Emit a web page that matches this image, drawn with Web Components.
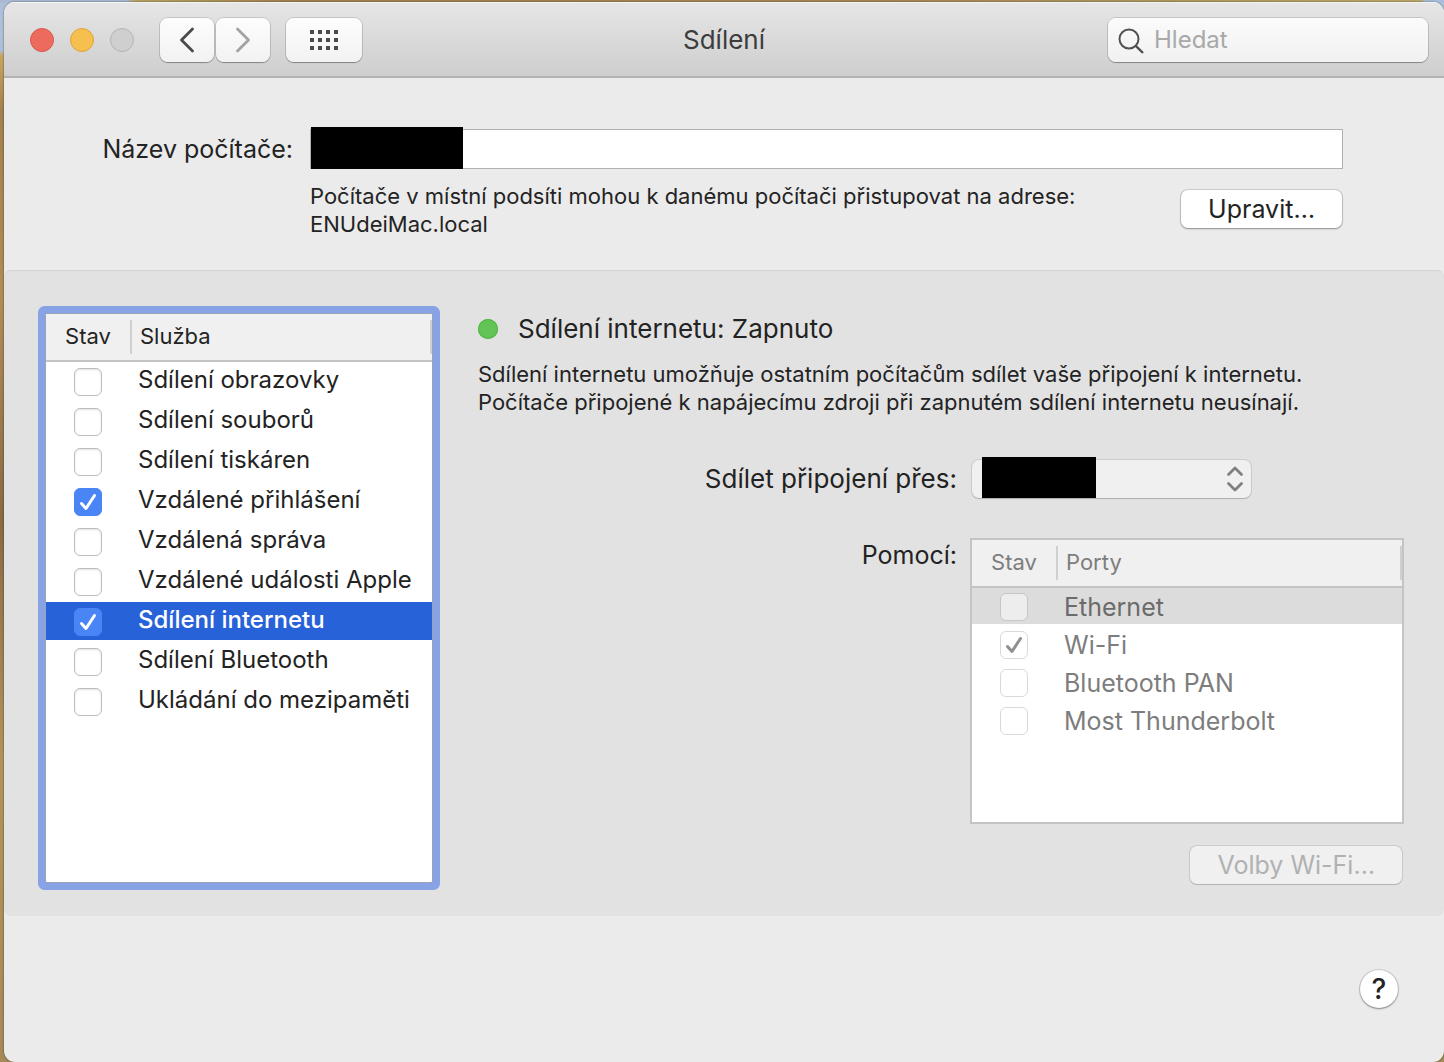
<!DOCTYPE html>
<html lang="cs">
<head>
<meta charset="utf-8">
<meta name="viewport" content="width=device-width, initial-scale=1">
<title>Sdílení</title>
<style>
  body {
    margin: 0;
    min-height: 100vh;
    box-sizing: border-box;
    padding: 2px 0 0 4px;
    display: flex;
    font-family: Inter, "Liberation Sans", sans-serif;
    font-size: 25px;
    line-height: 34px;
    color: #232323;
    background:
      linear-gradient(90deg, #a9b9d2 0 126px, #b9a364 136px, #a08350 300px, #a68a58 900px, #bda968 1420px, #a9bedd 1426px) 0 0 / 100% 3px no-repeat,
      linear-gradient(#aebfda 0, #aebfda 50px, #c9a562 56px, #a38150 110px, #b08c58 300px, #8a6a45 520px, #b3935c 760px, #a58a58 100%);
  }
</style>
</head>
<body>
<prefs-window>
  <title-bar slot="title">Sdílení</title-bar>
  <computer-name host="ENUdeiMac.local"></computer-name>
  <sharing-panel></sharing-panel>
  <help-bar slot="footer"></help-bar>
</prefs-window>

<script>
const define = (name, html, setup) => {
  const template = document.createElement('template');
  template.innerHTML = html;
  customElements.define(name, class extends HTMLElement {
    connectedCallback() {
      if (this.shadowRoot) return;
      this.attachShadow({ mode: 'open' }).append(template.content.cloneNode(true));
      if (setup) setup(this, this.shadowRoot);
    }
  });
};

define('prefs-window', `
  <style>
    :host { flex: 1; display: flex; flex-direction: column; min-width: 0; overflow: hidden;
      background: #ebebeb; border-radius: 11px; box-shadow: 0 0 2px rgba(0,0,0,.6); }
    main { display: flex; flex-direction: column; }
  </style>
  <slot name="title"></slot>
  <main><slot></slot></main>
  <slot name="footer"></slot>
`);

define('tool-button', `
  <style>
    :host { display: block; }
    button { display: flex; align-items: center; justify-content: center; width: var(--tool-width, 54px); height: 44px;
      padding: 0; border: 0; border-radius: 8px; color: #4a4a4a;
      background: linear-gradient(#fdfdfd, #f2f2f2);
      box-shadow: 0 0 0 1px rgba(0,0,0,.12), 0 1px 1px rgba(0,0,0,.28); }
    button:disabled { color: #a3a3a3; }
  </style>
  <button type="button"><slot></slot></button>
`, (host, root) => {
  const button = root.querySelector('button');
  button.disabled = host.hasAttribute('disabled');
  button.setAttribute('aria-label', host.getAttribute('label'));
});

define('search-field', `
  <style>
    :host { display: block; width: 320px; }
    label { display: flex; align-items: center; gap: 10px; height: 44px; padding: 0 10px; box-sizing: border-box;
      border-radius: 8px; background: linear-gradient(#fbfbfb, #f1f1f1);
      box-shadow: 0 0 0 1px rgba(0,0,0,.12), 0 1px 1px rgba(0,0,0,.28); }
    svg { flex: none; margin-top: 2px; }
    input { flex: 1; min-width: 0; padding: 0; border: 0; outline: 0; background: none; font: inherit; font-size: 24px; color: #232323; }
    input::placeholder { color: #a8a8a8; opacity: 1; }
    input::-webkit-search-cancel-button { display: none; }
  </style>
  <label>
    <svg width="26" height="26" viewBox="0 0 26 26" fill="none" stroke="#505050" stroke-width="2" aria-hidden="true">
      <circle cx="11" cy="11" r="9.5"/><path d="M17.8 17.8 25 25" stroke-width="2.4"/>
    </svg>
    <input type="search" placeholder="Hledat" aria-label="Hledat">
  </label>
`);

define('title-bar', `
  <style>
    :host { display: grid; grid-template-columns: 1fr auto 1fr; align-items: center; height: 76px; box-sizing: border-box;
      padding: 2px 16px 0; border-bottom: 2px solid #b2b2b2;
      background: linear-gradient(#e6e6e6, #cecece); box-shadow: inset 0 1px #f4f4f4; }
    .left, .lights, .nav { display: flex; align-items: center; }
    .left { padding-left: 10px; }
    .lights { gap: 16px; margin-right: 26px; }
    .lights button { width: 24px; height: 24px; padding: 0; box-sizing: border-box; border-radius: 50%;
      border: 1px solid var(--edge); background: var(--fill); }
    .close { --fill: #ed6a5f; --edge: #d8574e; }
    .min { --fill: #f6bf4e; --edge: #dca53b; }
    .zoom { --fill: #cfcfcf; --edge: #b3b3b3; }
    .nav { gap: 2px; margin-right: 16px; }
    .grid { --tool-width: 76px; }
    h1 { margin: 0; font: inherit; font-size: 26px; color: #3c3c3c; }
    search-field { justify-self: end; }
  </style>
  <div class="left">
    <div class="lights">
      <button type="button" class="close" aria-label="Zavřít"></button>
      <button type="button" class="min" aria-label="Minimalizovat"></button>
      <button type="button" class="zoom" aria-label="Zvětšit" disabled></button>
    </div>
    <div class="nav">
      <tool-button label="Zpět">
        <svg width="16" height="26" viewBox="0 0 16 26" fill="none" stroke="currentColor" stroke-width="2.8" stroke-linecap="round" stroke-linejoin="round"><path d="M13.5 2 2.5 13l11 11"/></svg>
      </tool-button>
      <tool-button label="Vpřed" disabled>
        <svg width="16" height="26" viewBox="0 0 16 26" fill="none" stroke="currentColor" stroke-width="2.8" stroke-linecap="round" stroke-linejoin="round"><path d="m2.5 2 11 11-11 11"/></svg>
      </tool-button>
    </div>
    <tool-button class="grid" label="Zobrazit vše">
      <svg width="28" height="20" viewBox="0 0 28 20" fill="none" stroke="currentColor" stroke-width="4" stroke-dasharray="4 4"><path d="M0 2h28M0 10h28M0 18h28"/></svg>
    </tool-button>
  </div>
  <h1><slot></slot></h1>
  <search-field></search-field>
`);

define('push-button', `
  <style>
    :host { display: block; }
    button { height: 38px; padding: 0 27px; border: 0; border-radius: 7px; font: inherit; line-height: 38px;
      color: #232323; background: #fff; box-shadow: 0 0 0 1px rgba(0,0,0,.13), 0 1px 2px rgba(0,0,0,.3); }
    button:disabled { color: #b1b1b1; background: #f0f0f0; box-shadow: 0 0 0 1px rgba(0,0,0,.1), 0 1px 1px rgba(0,0,0,.12); }
  </style>
  <button type="button"><slot></slot></button>
`, (host, root) => {
  root.querySelector('button').disabled = host.hasAttribute('disabled');
});

define('computer-name', `
  <style>
    :host { display: grid; grid-template-columns: 289px 1fr; column-gap: 17px; row-gap: 13px;
      padding: 51px 101px 32px 0; }
    label { justify-self: end; align-self: center; }
    .field { position: relative; }
    input { display: block; width: 100%; height: 40px; box-sizing: border-box; padding: 0 8px; border: 1px solid #b1b1b1;
      border-radius: 0; background: #fff; font: inherit; outline: 0; }
    .mask { position: absolute; left: 1px; top: -2px; width: 152px; height: 42px; background: #000; }
    .info { grid-column: 2; display: flex; justify-content: space-between; gap: 24px; }
    p { margin: 0; font-size: 22px; line-height: 28px; }
    push-button { padding: 8px 1px 0 0; }
  </style>
  <label for="name">Název počítače:</label>
  <div class="field"><input id="name" type="text"><span class="mask"></span></div>
  <div class="info">
    <p>Počítače v místní podsíti mohou k danému počítači přistupovat na adrese:<br><span id="host"></span></p>
    <push-button>Upravit…</push-button>
  </div>
`, (host, root) => {
  root.getElementById('host').textContent = host.getAttribute('host');
});

define('check-table', `
  <style>
    :host { display: block; box-sizing: border-box; background: #fff; border: 2px solid #c4c4c4; color: #7d7d7d; --line: #c4c4c4; }
    :host([focused]) { color: #232323; border: 1px solid #9aa3b8; box-shadow: 0 0 0 7px #87a3e5; border-radius: 2px; font-size: 24px; }
    table { width: 100%; border-collapse: separate; border-spacing: 0; table-layout: fixed; }
    th { height: 46px; padding: 0 0 2px 8px; box-sizing: border-box; text-align: left; font-weight: 400; font-size: 22px; line-height: 28px;
      box-shadow: 0 2px var(--line);
      background: linear-gradient(#d0d0d0, #d0d0d0) right 0 top 6px / 2px 34px no-repeat, #f0f0f0; }
    thead { position: relative; z-index: 1; }
    th:first-child { width: 86px; padding: 0 2px 2px 0; text-align: center; }
    td { height: 38px; box-sizing: border-box; padding: 4px 0 0; line-height: 34px; background-clip: border-box; }
    td:first-child { padding-right: 2px; text-align: center; }
    td:last-child { padding-left: 6px; }
    :host([focused]) td { height: 40px; padding-top: 0; border-bottom: 2px solid transparent; background-clip: padding-box; }
    :host([focused]) th { height: 48px; border-bottom: 2px solid var(--line); box-shadow: none; }
    td label { display: block; }
    :host([focused]) td label { margin-bottom: 2px; }
    input { appearance: none; display: block; width: 28px; height: 28px; margin: 0; box-sizing: border-box;
      border: 1px solid #bdbdbd; border-radius: 6px; background: #fff; box-shadow: inset 0 1px 2px rgba(0,0,0,.12); }
    .box { display: grid; width: 28px; margin: 0 auto; }
    :host([focused]) .box { padding-top: 2px; }
    .box > * { grid-area: 1 / 1; }
    .box svg { display: none; z-index: 1; pointer-events: none; color: #8f8f8f; }
    input:checked + svg { display: block; }
    input:disabled { border-color: #d9d9d9; box-shadow: none; }
    :host([focused]) .box svg { color: #fff; }
    :host([focused]) input:checked { background-color: #4a85f6; border-color: #4a85f6; box-shadow: none; }
    tr.selected td { background-color: #dcdcdc; }
    tr.selected { color: #6b6b6b; }
    tr.selected input { background-color: #ededed; border-color: #c6c6c6; }
    :host([focused]) tr.selected { color: #fff; font-weight: 500; }
    :host([focused]) tr.selected td { background-color: #2862d9; }
  </style>
  <table>
    <thead><tr><th scope="col">Stav</th><th scope="col"></th></tr></thead>
    <tbody></tbody>
  </table>
`, (host, root) => {
  root.querySelectorAll('th')[1].textContent = host.getAttribute('heading');
  const body = root.querySelector('tbody');
  [...host.querySelectorAll('data')].forEach((item, i) => {
    const row = body.insertRow();
    row.className = item.hasAttribute('selected') ? 'selected' : '';
    row.innerHTML = `<td><div class="box"><input type="checkbox" id="c${i}">
      <svg width="28" height="28" viewBox="0 0 28 28" fill="none" stroke="currentColor" stroke-width="3" stroke-linecap="round" stroke-linejoin="round"><path d="m7.500 15.500 4.500 5 8.500-13"/></svg></div></td>
      <td><label for="c${i}"></label></td>`;
    const input = row.querySelector('input');
    input.checked = item.hasAttribute('checked');
    input.disabled = host.hasAttribute('disabled');
    row.querySelector('label').textContent = item.textContent;
  });
});

define('sharing-panel', `
  <style>
    :host { display: flex; align-items: flex-start; gap: 38px; padding: 35px 40px 26px 34px; border: solid #d3d3d3; border-width: 1px 0 0;
      border-radius: 7px; background: #e2e2e2; }
    .services { width: 388px; flex: none; height: 570px; margin: 7px; }
    .detail { flex: 1; min-width: 0; margin-top: 6px; }
    h2 { display: flex; align-items: center; gap: 20px; margin: 0 0 14px; font: inherit; font-size: 26px; }
    h2::before { content: ""; width: 20px; height: 20px; border-radius: 50%; background: #61c455; box-shadow: inset 0 0 0 1px #55b249; }
    p { margin: 0; font-size: 22px; line-height: 28px; }
    form { display: grid; grid-template-columns: 1fr 434px; column-gap: 13px; row-gap: 39px; margin-top: 43px; }
    form > label, form > span { justify-self: end; }
    form > label { align-self: center; font-size: 26px; }
    .popup { display: grid; position: relative; align-items: center; width: 279px; margin: 1px 2px; border-radius: 7px; background: #f0f0f0;
      box-shadow: 0 0 0 1px rgba(0,0,0,.09), 0 1px 1px rgba(0,0,0,.15); }
    .popup > * { grid-area: 1 / 1; }
    select { appearance: none; width: 100%; height: 38px; padding: 0 40px 0 12px; border: 0; background: none; font: inherit; }
    .popup svg { justify-self: end; margin-right: 7px; pointer-events: none; }
    .mask { position: absolute; left: 10px; top: -3px; width: 114px; height: 41px; background: #000; }
    .ports { height: 286px; }
    .options { grid-column: 2; justify-self: end; margin: -17px 2px 1px 0; }
  </style>
  <check-table class="services" heading="Služba" focused>
    <data>Sdílení obrazovky</data>
    <data>Sdílení souborů</data>
    <data>Sdílení tiskáren</data>
    <data checked>Vzdálené přihlášení</data>
    <data>Vzdálená správa</data>
    <data>Vzdálené události Apple</data>
    <data checked selected>Sdílení internetu</data>
    <data>Sdílení Bluetooth</data>
    <data>Ukládání do mezipaměti</data>
  </check-table>
  <section class="detail">
    <h2>Sdílení internetu: Zapnuto</h2>
    <p>Sdílení internetu umožňuje ostatním počítačům sdílet vaše připojení k internetu.<br>Počítače připojené k napájecímu zdroji při zapnutém sdílení internetu neusínají.</p>
    <form>
      <label for="source">Sdílet připojení přes:</label>
      <div class="popup">
        <select id="source" disabled><option></option></select>
        <svg width="18" height="26" viewBox="0 0 18 26" fill="none" stroke="#7f7f7f" stroke-width="2.8" stroke-linecap="round" stroke-linejoin="round"><path d="m2.5 8.5L9 2l6.5 6.500M2.500 17.500 9 24l6.500-6.500"/></svg>
        <span class="mask"></span>
      </div>
      <span>Pomocí:</span>
      <check-table class="ports" heading="Porty" disabled>
        <data selected>Ethernet</data>
        <data checked>Wi-Fi</data>
        <data>Bluetooth PAN</data>
        <data>Most Thunderbolt</data>
      </check-table>
      <push-button class="options" disabled>Volby Wi-Fi…</push-button>
    </form>
  </section>
`);

define('help-bar', `
  <style>
    :host { display: flex; justify-content: flex-end; padding: 54px 46px; }
    button { width: 38px; height: 38px; padding: 0; border: 0; border-radius: 50%; font: inherit; font-size: 28px; font-weight: 500; line-height: 38px;
      color: #232323; background: #fff; box-shadow: 0 0 0 1px rgba(0,0,0,.13), 0 1px 2px rgba(0,0,0,.35); }
  </style>
  <button type="button" aria-label="Nápověda">?</button>
`);
</script>
</body>
</html>
